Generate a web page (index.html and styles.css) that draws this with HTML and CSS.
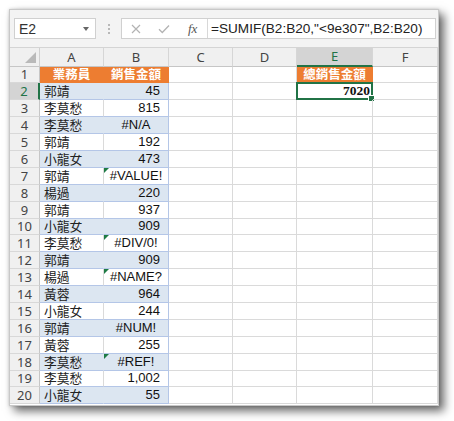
FILE: index.html
```html
<!DOCTYPE html>
<html>
<head>
<meta charset="utf-8">
<link rel="stylesheet" href="styles.css">
</head>
<body>
<div class="window">
  <div class="toolbar">
    <div class="namebox">
      <span class="nb-text">E2</span>
      <span class="nb-arrow"></span>
    </div>
    <div class="dots"><i></i><i></i><i></i></div>
    <div class="fbar">
      <div class="ficons">
        <svg class="ic-x" width="10" height="10" viewBox="0 0 10 10"><path d="M1 1L9 9M9 1L1 9" stroke="#b3b3b3" stroke-width="1.2" fill="none"/></svg>
        <svg class="ic-ok" width="12" height="10" viewBox="0 0 12 10"><path d="M1 5.2L4.3 8.5L11 1.5" stroke="#b3b3b3" stroke-width="1.3" fill="none"/></svg>
        <span class="ic-fx">fx</span>
      </div>
      <div class="ftext">=SUMIF(B2:B20,"&lt;9e307",B2:B20)</div>
    </div>
  </div>
  <div class="grid">
    <div class="corner"><span class="corner-tri"></span></div>
    <div class="ch">A</div><div class="ch">B</div><div class="ch">C</div><div class="ch">D</div><div class="ch sel">E</div><div class="ch">F</div>

    <div class="rh">1</div><div class="c hd">業務員</div><div class="c hd hdb">銷售金額</div><div class="c"></div><div class="c"></div><div class="c hd">總銷售金額</div><div class="c"></div>

    <div class="rh sel">2</div><div class="c ta blue">郭靖</div><div class="c tb blue num">45</div><div class="c"></div><div class="c"></div><div class="c total">7020<span class="selbox"><span class="handle"></span></span></div><div class="c"></div>
    <div class="rh">3</div><div class="c ta">李莫愁</div><div class="c tb num">815</div><div class="c"></div><div class="c"></div><div class="c"></div><div class="c"></div>
    <div class="rh">4</div><div class="c ta blue">李莫愁</div><div class="c tb blue err">#N/A</div><div class="c"></div><div class="c"></div><div class="c"></div><div class="c"></div>
    <div class="rh">5</div><div class="c ta">郭靖</div><div class="c tb num">192</div><div class="c"></div><div class="c"></div><div class="c"></div><div class="c"></div>
    <div class="rh">6</div><div class="c ta blue">小龍女</div><div class="c tb blue num">473</div><div class="c"></div><div class="c"></div><div class="c"></div><div class="c"></div>
    <div class="rh">7</div><div class="c ta">郭靖</div><div class="c tb err tri">#VALUE!</div><div class="c"></div><div class="c"></div><div class="c"></div><div class="c"></div>
    <div class="rh">8</div><div class="c ta blue">楊過</div><div class="c tb blue num">220</div><div class="c"></div><div class="c"></div><div class="c"></div><div class="c"></div>
    <div class="rh">9</div><div class="c ta">郭靖</div><div class="c tb num">937</div><div class="c"></div><div class="c"></div><div class="c"></div><div class="c"></div>
    <div class="rh">10</div><div class="c ta blue">小龍女</div><div class="c tb blue num">909</div><div class="c"></div><div class="c"></div><div class="c"></div><div class="c"></div>
    <div class="rh">11</div><div class="c ta">李莫愁</div><div class="c tb err tri">#DIV/0!</div><div class="c"></div><div class="c"></div><div class="c"></div><div class="c"></div>
    <div class="rh">12</div><div class="c ta blue">郭靖</div><div class="c tb blue num">909</div><div class="c"></div><div class="c"></div><div class="c"></div><div class="c"></div>
    <div class="rh">13</div><div class="c ta">楊過</div><div class="c tb err tri">#NAME?</div><div class="c"></div><div class="c"></div><div class="c"></div><div class="c"></div>
    <div class="rh">14</div><div class="c ta blue">黃蓉</div><div class="c tb blue num">964</div><div class="c"></div><div class="c"></div><div class="c"></div><div class="c"></div>
    <div class="rh">15</div><div class="c ta">小龍女</div><div class="c tb num">244</div><div class="c"></div><div class="c"></div><div class="c"></div><div class="c"></div>
    <div class="rh">16</div><div class="c ta blue">郭靖</div><div class="c tb blue err">#NUM!</div><div class="c"></div><div class="c"></div><div class="c"></div><div class="c"></div>
    <div class="rh">17</div><div class="c ta">黃蓉</div><div class="c tb num">255</div><div class="c"></div><div class="c"></div><div class="c"></div><div class="c"></div>
    <div class="rh">18</div><div class="c ta blue">李莫愁</div><div class="c tb blue err tri">#REF!</div><div class="c"></div><div class="c"></div><div class="c"></div><div class="c"></div>
    <div class="rh">19</div><div class="c ta">李莫愁</div><div class="c tb num">1,002</div><div class="c"></div><div class="c"></div><div class="c"></div><div class="c"></div>
    <div class="rh">20</div><div class="c ta blue">小龍女</div><div class="c tb blue num">55</div><div class="c"></div><div class="c"></div><div class="c"></div><div class="c"></div>
  </div>
</div>
</body>
</html>
```
FILE: styles.css
```css
html, body {
  margin: 0;
  padding: 0;
  background: #ffffff;
}
body {
  font-family: "Liberation Sans", "Noto Sans CJK TC", sans-serif;
  width: 454px;
  height: 421px;
  overflow: hidden;
}
.window {
  margin: 9px 0 0 9px;
  width: 428px;
  height: 395px;
  border: 1px solid #c8c8c8;
  background: #ffffff;
  box-shadow: 0 0 3px rgba(0,0,0,0.18), 5px 5px 9px rgba(0,0,0,0.6);
  overflow: hidden;
}
.toolbar {
  height: 38px;
  box-sizing: border-box;
  background: #f3f3f3;
  border-bottom: 1px solid #d4d4d4;
  display: flex;
  align-items: flex-start;
  padding: 8px 2px 0 4px;
}
.namebox {
  width: 82px;
  height: 21px;
  box-sizing: border-box;
  background: #fff;
  border: 1px solid #d0d0d0;
  display: flex;
  align-items: center;
  justify-content: space-between;
  padding: 0 6px 0 4px;
}
.nb-text {
  font-size: 14px;
  line-height: 16px;
  color: #333;
}
.nb-arrow {
  width: 0;
  height: 0;
  border-left: 3.5px solid transparent;
  border-right: 3.5px solid transparent;
  border-top: 4px solid #666;
}
.dots {
  width: 25px;
  height: 21px;
  display: flex;
  flex-direction: column;
  align-items: center;
  justify-content: center;
  gap: 2px;
}
.dots i {
  display: block;
  width: 2px;
  height: 2px;
  background: #b8b8b8;
}
.fbar {
  flex: 1;
  height: 21px;
  box-sizing: border-box;
  background: #fff;
  border: 1px solid #d0d0d0;
  display: flex;
  align-items: center;
}
.ficons {
  width: 86px;
  height: 100%;
  box-sizing: border-box;
  border-right: 1px solid #d8d8d8;
  display: flex;
  align-items: center;
  padding-left: 9px;
}
.ic-x { margin-right: 17px; }
.ic-ok { margin-right: 18px; }
.ic-fx {
  font-family: "Liberation Serif", serif;
  font-style: italic;
  font-size: 13px;
  line-height: 14px;
  color: #555;
}
.ftext {
  padding-left: 3px;
  font-size: 13.6px;
  line-height: 16px;
  color: #222;
  white-space: nowrap;
}
.grid {
  display: grid;
  grid-template-columns: 30px 64px 65px 64px 64px 76px 65px;
  grid-template-rows: 18.5px repeat(20, 16.9px);
}
.corner {
  background: #f0f0f0;
  border-right: 1px solid #d0d0d0;
  border-bottom: 1px solid #c6c6c6;
  position: relative;
}
.corner-tri {
  position: absolute;
  right: 3px;
  bottom: 3px;
  width: 0;
  height: 0;
  border-left: 11px solid transparent;
  border-bottom: 11px solid #b9b9b9;
}
.ch {
  background: #f0f0f0;
  border-right: 1px solid #d6d6d6;
  border-bottom: 1px solid #c6c6c6;
  box-sizing: border-box;
  display: flex;
  align-items: center;
  justify-content: center;
  font-family: "Noto Sans", "Liberation Sans", sans-serif;
  font-size: 13px;
  line-height: 14px;
  color: #444;
}
.ch.sel {
  background: #d4d4d4;
  border-bottom: 2px solid #217346;
  color: #217346;
}
.rh {
  background: #f0f0f0;
  border-right: 1px solid #c6c6c6;
  border-bottom: 1px solid #d8d8d8;
  box-sizing: border-box;
  display: flex;
  align-items: center;
  justify-content: center;
  font-family: "Noto Sans", "Liberation Sans", sans-serif;
  font-size: 13px;
  line-height: 14px;
  color: #444;
}
.rh.sel {
  background: #d4d4d4;
  border-right: 2px solid #217346;
  color: #217346;
}
.c {
  box-sizing: border-box;
  border-right: 1px solid #dadada;
  border-bottom: 1px solid #dadada;
  display: flex;
  align-items: center;
  padding: 0 3px;
  font-size: 13px;
  line-height: 14px;
  color: #111;
  white-space: nowrap;
  position: relative;
}
.hd {
  background: #ed7d31;
  color: #fff;
  font-weight: bold;
  justify-content: center;
  font-family: "Noto Sans CJK TC", sans-serif;
  font-size: 12.5px;
  border-right-color: #ed7d31;
  border-bottom-color: #ed7d31;
}
.ta {
  font-family: "Noto Sans CJK TC", sans-serif;
  font-size: 12.8px;
  padding-left: 4px;
  border-bottom-color: #b4c6e7;
  color: #222;
}
.tb {
  border-bottom-color: #b4c6e7;
  border-right-color: #b4c6e7;
}
.blue {
  background: #dce6f1;
}
.ta.blue {
  border-right-color: #dce6f1;
}
.num {
  justify-content: flex-end;
  padding-right: 8px;
}
.err {
  justify-content: center;
}
.tri::before {
  content: "";
  position: absolute;
  top: 0;
  left: 0;
  width: 0;
  height: 0;
  border-top: 5px solid #1e7b45;
  border-right: 5px solid transparent;
}
.total {
  justify-content: flex-end;
  padding-right: 2px;
  font-family: "Liberation Serif", serif;
  font-weight: bold;
  font-size: 13.5px;
}
.selbox {
  position: absolute;
  left: -1px;
  top: -1px;
  right: -1px;
  bottom: -1px;
  border: 2px solid #217346;
  pointer-events: none;
}
.handle {
  position: absolute;
  right: -4px;
  bottom: -4px;
  width: 5px;
  height: 5px;
  background: #217346;
  border: 1px solid #fff;
}
```
